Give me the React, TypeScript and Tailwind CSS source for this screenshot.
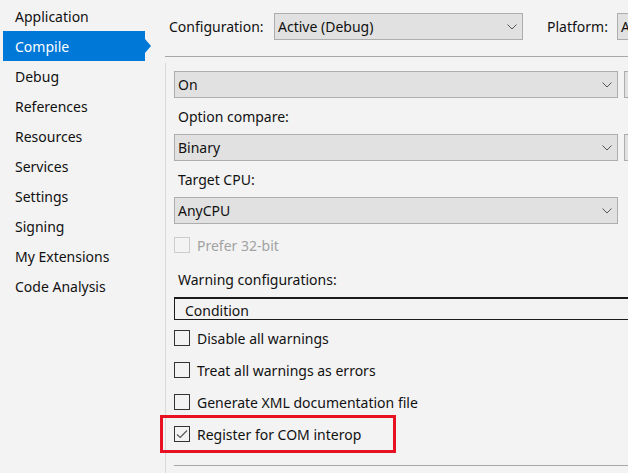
const font = { fontFamily: '"Noto Sans", "Open Sans", sans-serif' };

const navItems = [
  "Application",
  "Compile",
  "Debug",
  "References",
  "Resources",
  "Services",
  "Settings",
  "Signing",
  "My Extensions",
  "Code Analysis",
];

function Chevron() {
  return (
    <svg width="10" height="6" viewBox="0 0 10 6" className="shrink-0">
      <path d="M0.5 0.5 L5 5 L9.5 0.5" fill="none" stroke="#555" strokeWidth="1" />
    </svg>
  );
}

function Dropdown({ value, className }: { value: string; className: string }) {
  return (
    <div
      className={`flex h-[27px] items-center justify-between overflow-hidden border border-[#adadad] bg-[#e1e1e1] pl-[3px] pr-[5px] text-[14px] text-[#111111] ${className}`}
    >
      <span>{value}</span>
      <Chevron />
    </div>
  );
}

function Checkbox({
  label,
  checked = false,
  disabled = false,
}: {
  label: string;
  checked?: boolean;
  disabled?: boolean;
}) {
  return (
    <div className="flex h-[32px] items-center gap-[7px]">
      <div
        className={`flex h-[16px] w-[16px] items-center justify-center border ${
          disabled ? "border-[#cccccc]" : "border-[#333333]"
        }`}
      >
        {checked && (
          <svg width="14" height="14" viewBox="0 0 14 14">
            <path d="M2 7.5 L5.2 10.5 L12 3.5" fill="none" stroke="#555" strokeWidth="1.1" />
          </svg>
        )}
      </div>
      <span className={`text-[14px] ${disabled ? "text-[#a2a2a2]" : "text-[#111111]"}`}>
        {label}
      </span>
    </div>
  );
}

export default function App() {
  return (
    <div
      className="flex h-[473px] w-[628px] overflow-hidden bg-[#f3f3f3] text-[#111111]"
      style={font}
    >
      {/* Sidebar */}
      <div className="w-[165px] shrink-0 pt-[1px]">
        {navItems.map((item) =>
          item === "Compile" ? (
            <div key={item} className="relative ml-[3px] flex h-[30px] w-[142px] items-center bg-[#0078d7] pl-[12px] text-[14px] text-white">
              {item}
              <div className="absolute left-full top-1/2 h-0 w-0 -translate-y-1/2 border-y-[7px] border-l-[6px] border-y-transparent border-l-[#0078d7]" />
            </div>
          ) : (
            <div key={item} className="flex h-[30px] items-center pl-[15px] text-[14px]">
              {item}
            </div>
          )
        )}
      </div>

      {/* Main */}
      <div className="flex min-w-0 flex-1 flex-col">
        <div className="flex h-[57px] shrink-0 items-center overflow-hidden whitespace-nowrap border-b border-[#a8a8a8] pb-[3px] pl-[4px] text-[14px]">
          <span className="w-[105px] shrink-0">Configuration:</span>
          <Dropdown value="Active (Debug)" className="w-[249px] shrink-0" />
          <span className="ml-[24px] w-[70px] shrink-0">Platform:</span>
          <Dropdown value="Any CPU" className="w-[120px] shrink-0" />
        </div>

        <div className="mt-[6px] flex-1 border-l border-[#d9d9d9] pl-[8px] pt-[8px]">
          <div className="flex gap-[6px]">
            <Dropdown value="On" className="w-[444px] shrink-0" />
            <div className="h-[27px] w-[60px] shrink-0 border border-[#adadad] bg-[#e1e1e1]" />
          </div>
          <div className="flex h-[36px] items-center pl-[4px] text-[14px]">Option compare:</div>
          <div className="flex gap-[6px]">
            <Dropdown value="Binary" className="w-[444px] shrink-0" />
            <div className="h-[27px] w-[60px] shrink-0 border border-[#adadad] bg-[#e1e1e1]" />
          </div>
          <div className="flex h-[36px] items-center pl-[4px] text-[14px]">Target CPU:</div>
          <Dropdown value="AnyCPU" className="w-[444px]" />
          <div className="mt-[5px]">
            <Checkbox label="Prefer 32-bit" disabled />
          </div>
          <div className="flex h-[36px] items-center pl-[4px] text-[14px]">Warning configurations:</div>
          <div className="h-[22px] overflow-hidden border-l border-t-2 border-[#1b1b1b]">
            <div className="pl-[10px] pt-[2px] text-[14px] leading-[20px]">Condition</div>
          </div>
          <div className="h-[1px] bg-[#1b1b1b]" />
          <div className="mt-[2px]">
            <Checkbox label="Disable all warnings" />
            <Checkbox label="Treat all warnings as errors" />
            <Checkbox label="Generate XML documentation file" />
            <div className="relative">
              <Checkbox label="Register for COM interop" checked />
              <div className="pointer-events-none absolute left-[-14px] top-[-3px] h-[38px] w-[236px] border-[3px] border-[#e81123]" />
            </div>
          </div>
          <div className="mt-[15px] h-[1px] bg-[#a8a8a8]" />
        </div>
      </div>
    </div>
  );
}
